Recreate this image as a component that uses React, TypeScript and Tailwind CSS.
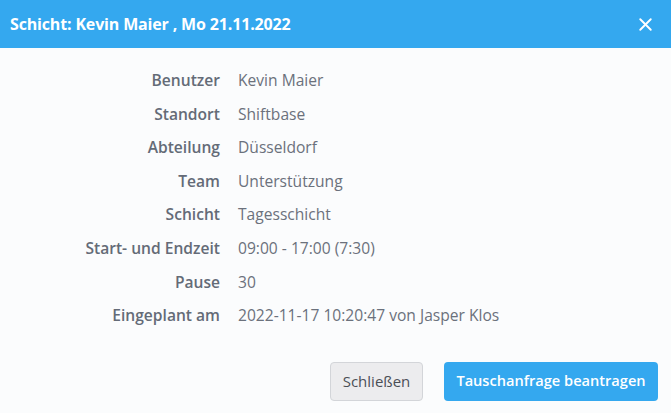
import React from 'react';
import { X } from 'lucide-react';

const rows: [string, string][] = [
  ['Benutzer', 'Kevin Maier'],
  ['Standort', 'Shiftbase'],
  ['Abteilung', 'Düsseldorf'],
  ['Team', 'Unterstützung'],
  ['Schicht', 'Tagesschicht'],
  ['Start- und Endzeit', '09:00 - 17:00 (7:30)'],
  ['Pause', '30'],
  ['Eingeplant am', '2022-11-17 10:20:47 von Jasper Klos'],
];

const App: React.FC = () => {
  return (
    <div className="w-[671px] h-[413px] bg-[#fbfcfd] flex flex-col font-['Open_Sans',sans-serif]">
      <div className="h-12 bg-[#34a8ef] flex items-center justify-between pl-2.5 pr-[15px]">
        <h2 className="text-white text-[16px] font-bold tracking-[-0.01em]">
          Schicht: Kevin Maier , Mo 21.11.2022
        </h2>
        <X className="w-[21px] h-[21px] text-white" strokeWidth={2.2} />
      </div>

      <div className="grid grid-cols-[220px_1fr] gap-x-[18px] pt-[21px]">
        {rows.map(([label, value]) => (
          <React.Fragment key={label}>
            <div className="h-[33.6px] flex items-start justify-end text-[15.6px] leading-[22px] font-semibold text-[#646b77]">
              {label}
            </div>
            <div className="h-[33.6px] flex items-start text-[15.6px] leading-[22px] text-[#6b717c]">
              {value}
            </div>
          </React.Fragment>
        ))}
      </div>

      <div className="flex justify-end gap-[21px] pr-[13px] mt-[24px]">
        <button className="h-[39px] w-[93px] rounded bg-[#ececee] border border-[#d3d5d9] text-[#4b4f56] text-[15px]">
          Schließen
        </button>
        <button className="h-[39px] w-[214px] rounded bg-[#34a8ef] text-white text-[14.6px] font-semibold">
          Tauschanfrage beantragen
        </button>
      </div>
    </div>
  );
};

export default App;
